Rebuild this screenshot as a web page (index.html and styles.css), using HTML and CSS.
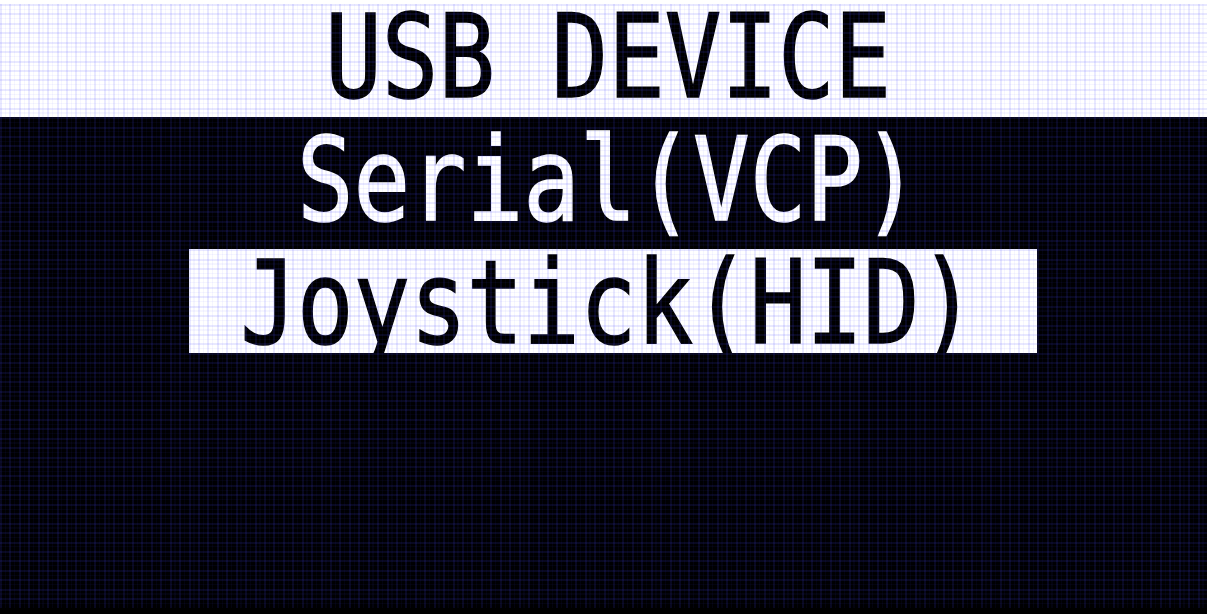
FILE: index.html
```html
<!DOCTYPE html>
<html lang="en">
<head>
<meta charset="utf-8">
<title>USB DEVICE</title>
<link rel="stylesheet" href="styles.css">
</head>
<body>
<div class="screen">
  <div class="header">
    <div class="line centered">USB DEVICE</div>
  </div>
  <div class="menu">
    <div class="line centered">Serial(VCP)</div>
    <div class="selected">
      <div class="line">Joystick(HID)</div>
    </div>
  </div>
  <div class="grid"></div>
</div>
</body>
</html>
```

FILE: styles.css
```css
html, body {
  margin: 0;
  padding: 0;
}

body {
  width: 1207px;
  height: 614px;
  overflow: hidden;
  background: linear-gradient(to bottom, #ffffff 0 50%, #000000 50% 100%);
}

.screen {
  position: relative;
  width: 1207px;
  height: 603.5px;
  margin-top: 4px;
  background: #000002;
  display: flex;
  flex-direction: column;
  font-family: "DejaVu Sans Mono", "Liberation Mono", monospace;
}

.header {
  flex: none;
  height: 113.2px;
  box-sizing: border-box;
  padding-top: 9.43px;
  background: #ffffff;
  color: #000000;
}

.line {
  font-size: 94px;
  line-height: 72px;
  height: 72px;
  white-space: pre;
  -webkit-text-stroke: 1.3px currentColor;
  transform: scaleY(1.24);
  transform-origin: 50% 0;
}

.centered {
  text-align: center;
  padding-left: 9.43px;
}

.menu {
  flex: 1;
  padding-top: 18.9px;
  color: #ffffff;
}

.selected {
  margin-top: 41.1px;
  margin-left: 188.6px;
  width: 848.7px;
  height: 103.7px;
  box-sizing: border-box;
  padding-top: 9.43px;
  background: #ffffff;
  color: #000000;
}

.selected .line {
  text-align: center;
  padding-right: 9.43px;
}

.grid {
  position: absolute;
  inset: 0;
  pointer-events: none;
  background-image:
    repeating-linear-gradient(to right, rgba(70, 70, 255, 0.12) 0 2px, transparent 2px 9.43px),
    repeating-linear-gradient(to bottom, rgba(70, 70, 255, 0.12) 0 2px, transparent 2px 9.43px),
    repeating-linear-gradient(to right, transparent 0 4.715px, rgba(70, 70, 255, 0.05) 4.715px 5.9px, transparent 5.9px 9.43px),
    repeating-linear-gradient(to bottom, transparent 0 4.715px, rgba(70, 70, 255, 0.05) 4.715px 5.9px, transparent 5.9px 9.43px);
}
```
